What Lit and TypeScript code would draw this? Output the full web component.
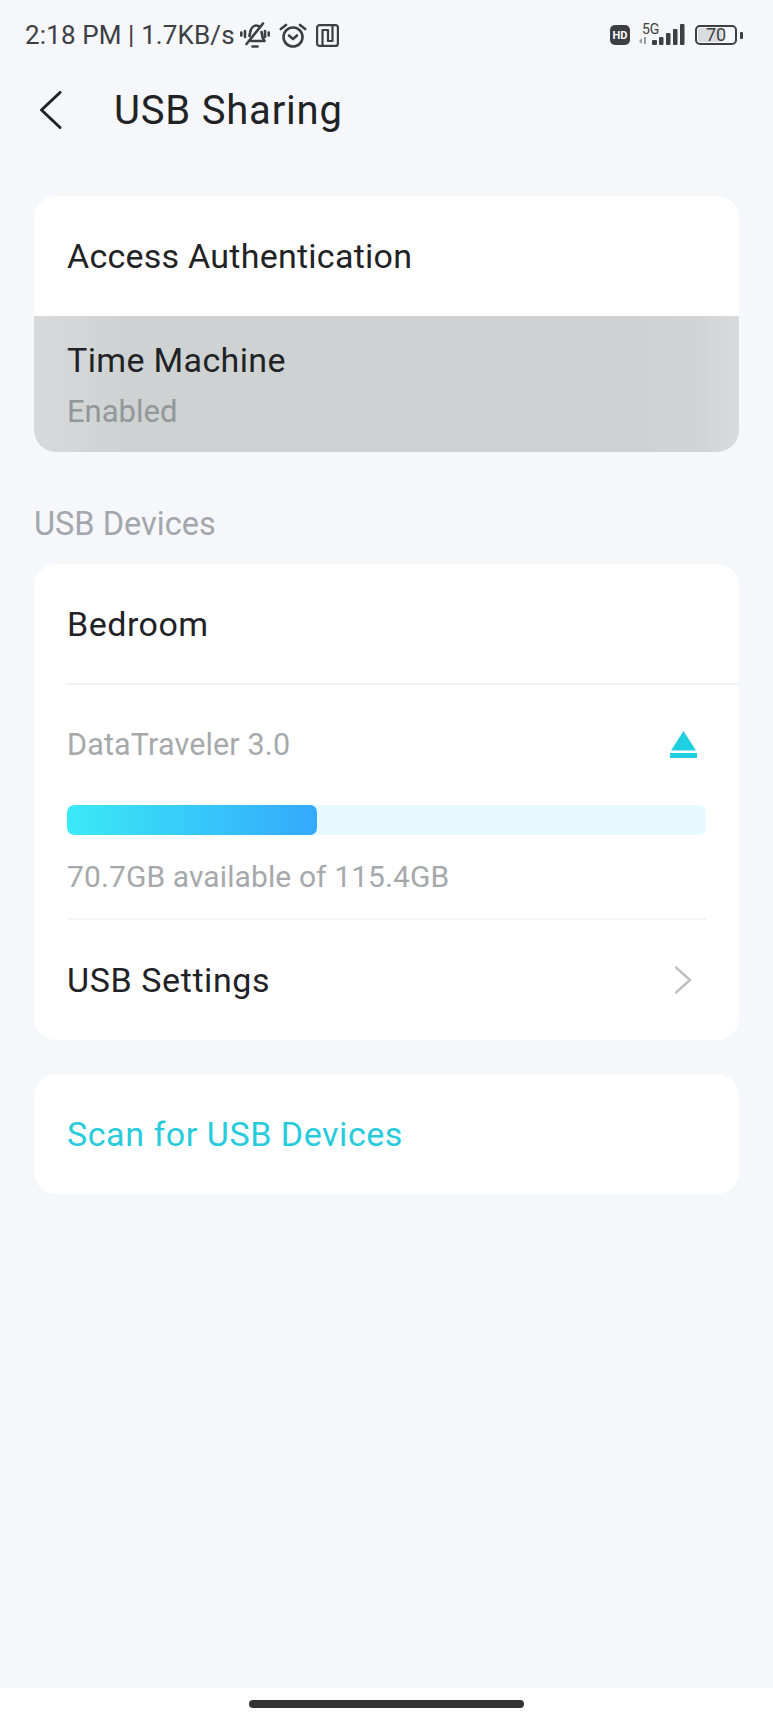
import { LitElement, html, css } from 'lit';
import { customElement } from 'lit/decorators.js';

@customElement('app-root')
export class AppRoot extends LitElement {
  static styles = css`
    :host {
      display: block;
      width: 773px;
      height: 1719px;
      overflow: hidden;
      background: #fff;
      font-family: Roboto, 'Liberation Sans', sans-serif;
      color: #1f2326;
    }

    .screen {
      height: 1688px;
      background: #f5f7fb;
      display: flow-root;
    }

    .status {
      height: 70px;
      display: flex;
      align-items: center;
      padding: 0 30px 0 25px;
      color: #3c4043;
    }

    .status-text {
      font-size: 26px;
      letter-spacing: 0.12px;
      margin-right: 5px;
      white-space: nowrap;
    }

    .status-left {
      display: flex;
      align-items: center;
      flex: 1;
    }

    .status-left svg + svg {
      margin-left: 9px;
    }

    .status-right {
      display: flex;
      align-items: center;
    }

    .hd {
      width: 20px;
      height: 20px;
      border-radius: 5px;
      background: #3c4043;
      color: #fff;
      font-size: 11px;
      font-weight: 700;
      display: flex;
      align-items: center;
      justify-content: center;
      margin-right: 9px;
    }

    .signal {
      position: relative;
      width: 46px;
      height: 22px;
      margin-right: 10px;
    }

    .signal span {
      position: absolute;
      left: 3px;
      top: -2px;
      font-size: 14px;
      line-height: 14px;
    }

    .battery {
      position: relative;
      width: 42px;
      height: 20px;
      box-sizing: border-box;
      border: 2px solid #3c4043;
      border-radius: 5px;
      font-size: 18px;
      line-height: 16px;
      text-align: center;
    }

    .battery::before {
      content: '';
      position: absolute;
      left: 1px;
      top: 1px;
      bottom: 1px;
      width: 24px;
      border-radius: 2px;
      background: #d9dbdc;
      z-index: 0;
    }

    .battery b {
      position: relative;
      font-weight: 400;
    }

    .nub {
      width: 3px;
      height: 7px;
      margin-left: 3px;
      border-radius: 1px;
      background: #3c4043;
    }

    .header {
      height: 80px;
      display: flex;
      align-items: center;
      padding-left: 40px;
    }

    .header svg {
      margin-right: 52px;
      flex: none;
    }

    .title {
      font-size: 40px;
      letter-spacing: 0.8px;
    }

    .content {
      padding: 46px 34px 0;
    }

    .card {
      background: #fff;
      border-radius: 22px;
      overflow: hidden;
    }

    .row {
      height: 120px;
      padding: 0 33px;
      display: flex;
      align-items: center;
      justify-content: space-between;
      font-size: 34px;
      letter-spacing: 0.25px;
    }

    .pressed {
      height: 136px;
      flex-direction: column;
      align-items: flex-start;
      justify-content: flex-start;
      letter-spacing: 0.35px;
      background: linear-gradient(90deg, #d7dada 0, #d3d6d7 50px, #ced2d3 90px, #ced2d3 600px, #d1d4d4 660px, #d8dbdb 705px);
    }

    .pressed .name {
      margin-top: 24px;
      line-height: 40px;
    }

    .pressed .sub {
      margin-top: 13px;
      font-size: 31px;
      letter-spacing: 0;
      line-height: 38px;
      color: #92979a;
    }

    .section {
      margin: 42px 0 0;
      height: 70px;
      font-size: 32.5px;
      line-height: 60px;
      color: #a3a7ad;
    }

    .lined {
      margin-left: 33px;
      padding: 0;
      height: 119px;
      border-bottom: 2px solid #f3f4f6;
      letter-spacing: 0.5px;
    }

    .device {
      padding: 0 33px;
    }

    .device-head {
      height: 120px;
      display: flex;
      align-items: center;
      justify-content: space-between;
      font-size: 30.5px;
      letter-spacing: 0.15px;
      color: #a6a9ab;
    }

    .device-head span {
      margin-bottom: 2px;
    }

    .device-head svg {
      margin-right: 9px;
      margin-bottom: 2px;
    }

    .bar {
      height: 30px;
      border-radius: 7px;
      background: #e6f9fd;
      overflow: hidden;
    }

    .fill {
      height: 100%;
      border-radius: 7px;
      background: linear-gradient(90deg, #3aeaf6, #34a9fd);
    }

    .usage {
      height: 83px;
      display: flex;
      align-items: center;
      font-size: 30px;
      letter-spacing: 0.1px;
      color: #a6a9ab;
      border-bottom: 2px solid #f3f4f6;
    }

    .settings {
      padding: 0;
      height: 120px;
      letter-spacing: 0.6px;
    }

    .settings svg {
      margin-right: 14px;
    }

    .scan {
      margin-top: 34px;
    }

    .scan .row {
      color: #27cbdc;
      letter-spacing: 0.55px;
    }

    .home {
      height: 31px;
      display: flex;
      justify-content: center;
      padding-top: 12px;
    }

    .home i {
      width: 275px;
      height: 8px;
      border-radius: 4px;
      background: #333;
    }
  `;

  private storageUsed = 39.1;

  render() {
    return html`
      <div class="screen">
        <div class="status">
          <div class="status-left">
            <span class="status-text">2:18 PM | 1.7KB/s</span>
            <svg width="30" height="26" viewBox="0 0 30 26" fill="none" stroke="#3c4043" stroke-width="2.6" stroke-linecap="round" stroke-linejoin="round">
              <path d="M9.500 14c.2-1 .3-2 .5-3 .7-4 3-7.500 6-7.500 1.500 0 3 .6 4 1.500" />
              <path d="M21.500 10c.3 3 .8 6 3 9H11" />
              <path d="M6.500 22 23 1.500" />
              <path d="M12.500 24.500h5" />
              <path d="M5 9v6M1.300 10.500v3M25 9v6M28.700 10.500v3" />
            </svg>
            <svg width="28" height="25" viewBox="0 0 28 25" fill="none" stroke="#3c4043" stroke-width="2.600" stroke-linecap="round" stroke-linejoin="round">
              <circle cx="14" cy="14" r="9.500" />
              <path d="M1.800 6 7 2M26.200 6 21 2M10 12.500l4 3.500 4-3.500" />
            </svg>
            <svg width="23" height="23" viewBox="0 0 23 23" fill="none" stroke="#3c4043" stroke-width="2.200" stroke-linejoin="round">
              <rect x="1.100" y="1.100" width="20.800" height="20.800" rx="2.500" />
              <path d="M6.500 21.500V6h5.500v10.500M16.500 1.500V17h-5.500" />
            </svg>
          </div>
          <div class="status-right">
            <div class="hd">HD</div>
            <div class="signal">
              <span>5G</span>
              <svg width="46" height="22" viewBox="0 0 46 22" fill="#3c4043">
                <path d="M3 14 0 17l3 3zM5 13h2v7H5z" fill="#9a9da0" />
                <rect x="13" y="16" width="5" height="5" rx="1" />
                <rect x="20" y="13" width="4.500" height="8" rx="1" />
                <rect x="27" y="9" width="4.500" height="12" rx="1" />
                <rect x="34" y="5" width="4.500" height="16" rx="1" />
                <rect x="41" y="0" width="4.500" height="21" rx="1" />
              </svg>
            </div>
            <div class="battery"><b>70</b></div>
            <div class="nub"></div>
          </div>
        </div>

        <div class="header">
          <svg width="22" height="38" viewBox="0 0 22 38" fill="none" stroke="#1f2326" stroke-width="3" stroke-linecap="round" stroke-linejoin="round">
            <path d="M20 1.500 1.500 19 20 36.500" />
          </svg>
          <span class="title">USB Sharing</span>
        </div>

        <div class="content">
          <div class="card">
            <div class="row">Access Authentication</div>
            <div class="row pressed">
              <div class="name">Time Machine</div>
              <div class="sub">Enabled</div>
            </div>
          </div>

          <div class="section">USB Devices</div>

          <div class="card">
            <div class="row lined">Bedroom</div>
            <div class="device">
              <div class="device-head">
                <span>DataTraveler 3.0</span>
                <svg width="27" height="27" viewBox="0 0 27 27" fill="#1fd0e3">
                  <path d="M13.500 0 26 19.500H1z" />
                  <rect x="0" y="22" width="27" height="5" />
                </svg>
              </div>
              <div class="bar">
                <div class="fill" style="width:${this.storageUsed}%"></div>
              </div>
              <div class="usage">70.7GB available of 115.4GB</div>
              <div class="row settings">
                <span>USB Settings</span>
                <svg width="18" height="28" viewBox="0 0 18 28" fill="none" stroke="#bfc1c3" stroke-width="2.500" stroke-linecap="round" stroke-linejoin="round">
                  <path d="M2 1.500 16 14 2 26.500" />
                </svg>
              </div>
            </div>
          </div>

          <div class="card scan">
            <div class="row">Scan for USB Devices</div>
          </div>
        </div>
      </div>
      <div class="home"><i></i></div>
    `;
  }
}

declare global {
  interface HTMLElementTagNameMap {
    'app-root': AppRoot;
  }
}
